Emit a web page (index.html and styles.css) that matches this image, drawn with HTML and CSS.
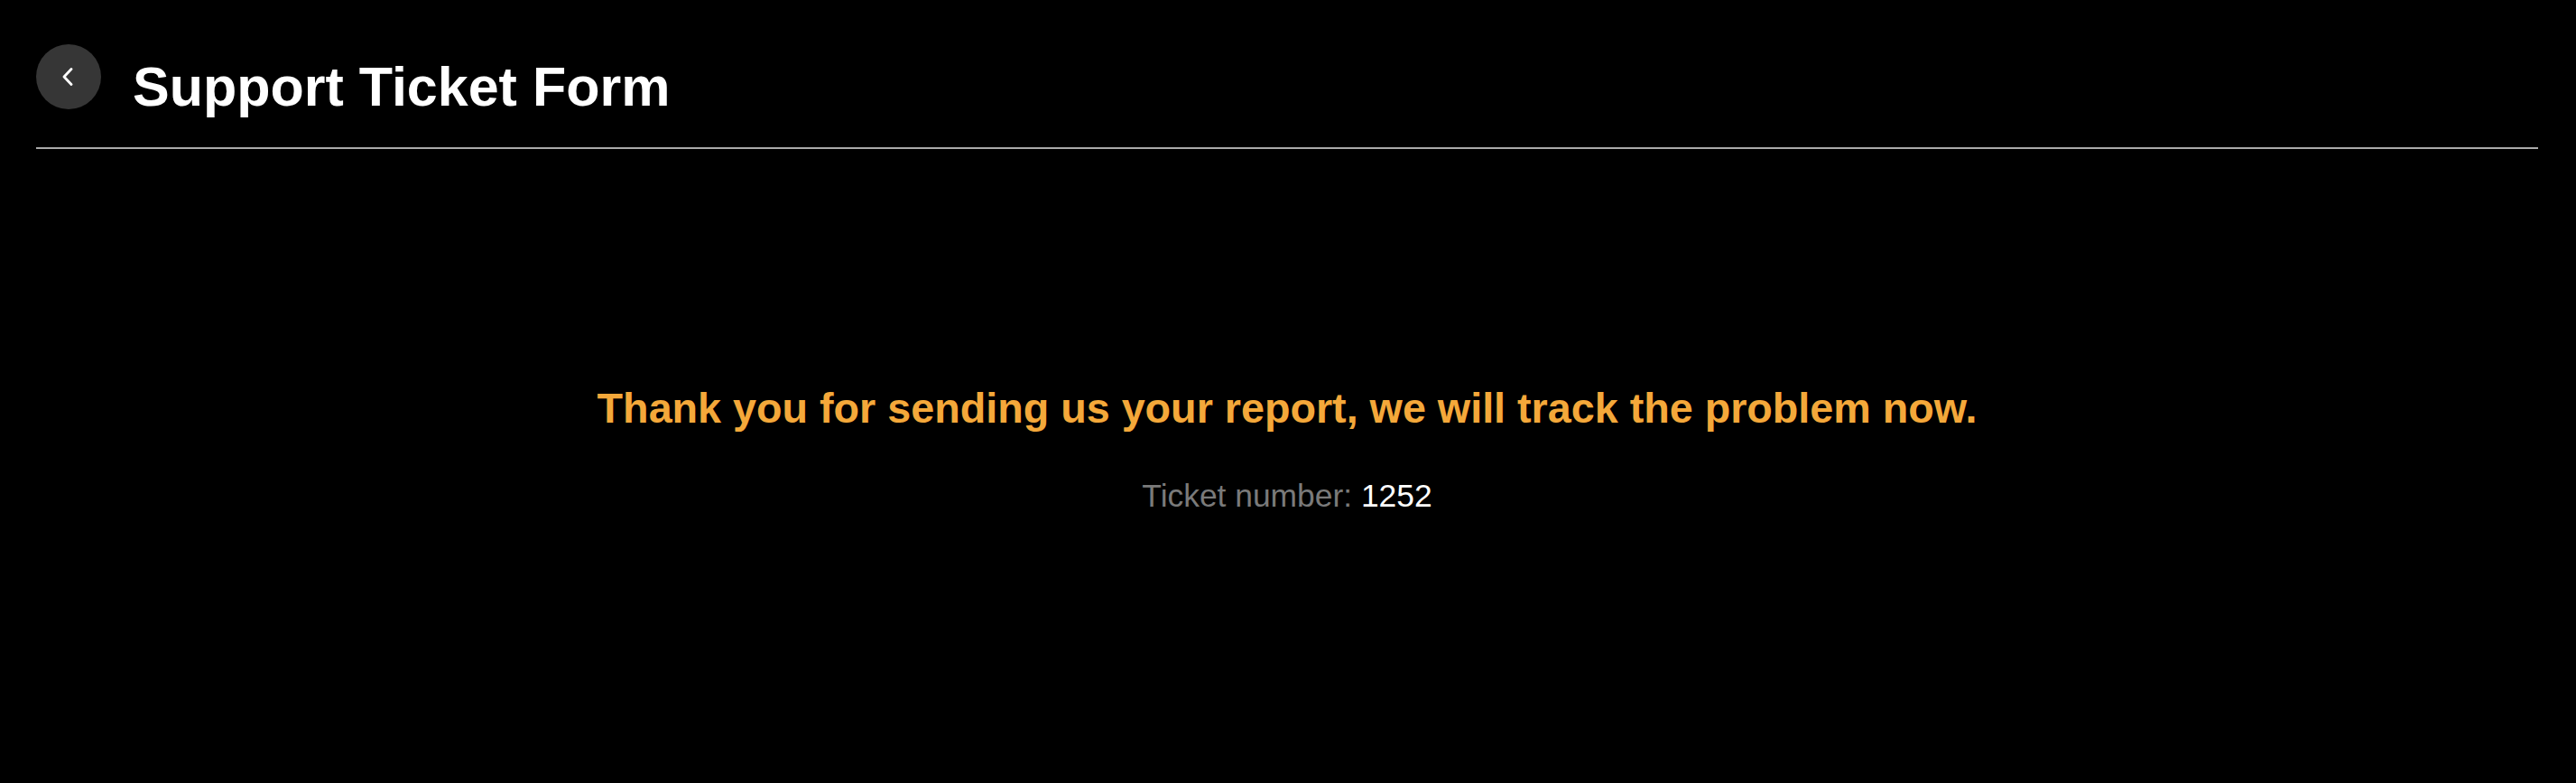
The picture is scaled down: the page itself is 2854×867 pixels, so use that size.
FILE: index.html
```html
<!DOCTYPE html>
<html lang="en">
<head>
<meta charset="utf-8">
<title>Support Ticket Form</title>
<link rel="stylesheet" href="styles.css">
</head>
<body>
<div class="page">
  <header class="header">
    <button class="back" type="button" aria-label="Back">
      <svg width="14" height="20" viewBox="0 0 14 20"><polyline points="11,1.5 3,10 11,18.5" fill="none" stroke="#ffffff" stroke-width="2.8" stroke-linecap="round" stroke-linejoin="round"/></svg>
    </button>
    <h1 class="title">Support Ticket Form</h1>
  </header>
  <main class="content">
    <p class="thanks">Thank you for sending us your report, we will track the problem now.</p>
    <p class="ticket">Ticket number: <span class="ticket-no">1252</span></p>
  </main>
</div>
</body>
</html>
```

FILE: styles.css
```css
html, body {
  margin: 0;
  padding: 0;
  background: #000000;
}
body {
  font-family: "Liberation Sans", Arial, sans-serif;
  color: #ffffff;
}
.page {
  padding: 0 42px 0 40px;
}
.header {
  display: flex;
  align-items: flex-start;
  height: 163px;
  border-bottom: 2px solid #aaaaaa;
}
.back {
  margin-top: 49px;
  width: 72px;
  height: 72px;
  border-radius: 50%;
  border: none;
  background: #363636;
  padding: 0 2px 0 0;
  display: flex;
  align-items: center;
  justify-content: center;
  flex-shrink: 0;
}
.title {
  margin: 61px 0 0 35px;
  font-size: 61px;
  line-height: 70px;
  font-weight: 700;
  color: #ffffff;
}
.content {
  display: flex;
  flex-direction: column;
  align-items: center;
  padding-top: 260px;
}
.thanks {
  margin: 0;
  font-size: 46.7px;
  line-height: 54px;
  font-weight: 700;
  color: #f4a83a;
}
.ticket {
  margin: 50px 0 0 0;
  font-size: 35.4px;
  line-height: 41px;
  color: #7a7a7a;
}
.ticket-no {
  color: #ffffff;
}
```
